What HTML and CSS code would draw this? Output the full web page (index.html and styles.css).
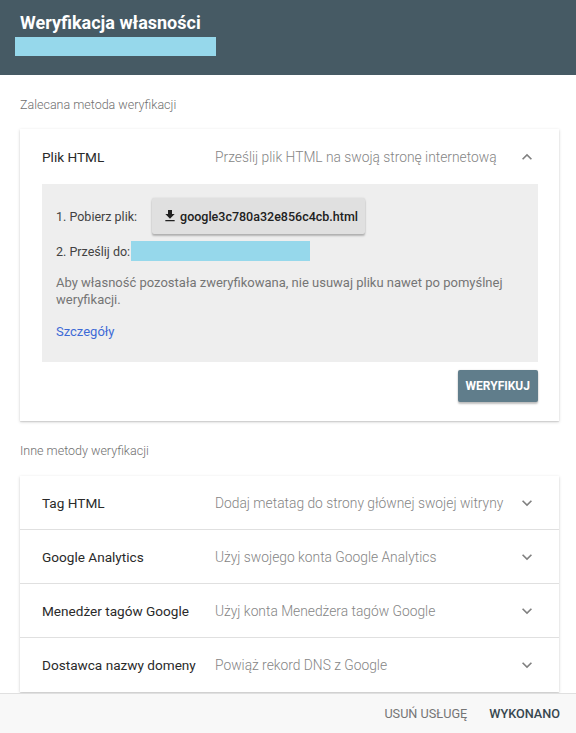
FILE: index.html
```html
<!DOCTYPE html>
<html lang="pl">
<head>
<meta charset="utf-8">
<title>Weryfikacja własności</title>
<link rel="stylesheet" href="styles.css">
</head>
<body>
<header class="top">
  <h1 class="top-title">Weryfikacja własności</h1>
  <div class="redact redact-head"></div>
</header>

<main class="content">
  <div class="section-label section-first">Zalecana metoda weryfikacji</div>

  <section class="card card-main">
    <div class="row row-open">
      <div class="row-title">Plik HTML</div>
      <div class="row-desc">Prześlij plik HTML na swoją stronę internetową</div>
      <svg class="chev" viewBox="0 0 24 24"><path d="M12 8l-6 6 1.41 1.41L12 10.83l4.59 4.58L18 14z"/></svg>
    </div>
    <div class="panel">
      <div class="step">
        <span class="step-label">1. Pobierz plik:</span>
        <button class="file-btn">
          <svg class="dl" viewBox="0 0 24 24"><path d="M19 9h-4V3H9v6H5l7 7 7-7zM5 18v2h14v-2H5z"/></svg>
          <span>google3c780a32e856c4cb.html</span>
        </button>
      </div>
      <div class="step step-two">
        <span class="step-label">2. Prześlij do:</span>
        <span class="redact redact-url"></span>
      </div>
      <p class="note">Aby własność pozostała zweryfikowana, nie usuwaj pliku nawet po pomyślnej weryfikacji.</p>
      <a class="link" href="#">Szczegóły</a>
    </div>
    <div class="actions">
      <button class="verify-btn">WERYFIKUJ</button>
    </div>
  </section>

  <div class="section-label section-second">Inne metody weryfikacji</div>

  <section class="card card-list">
    <div class="row">
      <div class="row-title">Tag HTML</div>
      <div class="row-desc">Dodaj metatag do strony głównej swojej witryny</div>
      <svg class="chev" viewBox="0 0 24 24"><path d="M16.59 8.59L12 13.17 7.41 8.59 6 10l6 6 6-6z"/></svg>
    </div>
    <div class="row">
      <div class="row-title">Google Analytics</div>
      <div class="row-desc">Użyj swojego konta Google Analytics</div>
      <svg class="chev" viewBox="0 0 24 24"><path d="M16.59 8.59L12 13.17 7.41 8.59 6 10l6 6 6-6z"/></svg>
    </div>
    <div class="row">
      <div class="row-title">Menedżer tagów Google</div>
      <div class="row-desc">Użyj konta Menedżera tagów Google</div>
      <svg class="chev" viewBox="0 0 24 24"><path d="M16.59 8.59L12 13.17 7.41 8.59 6 10l6 6 6-6z"/></svg>
    </div>
    <div class="row">
      <div class="row-title">Dostawca nazwy domeny</div>
      <div class="row-desc">Powiąż rekord DNS z Google</div>
      <svg class="chev" viewBox="0 0 24 24"><path d="M16.59 8.59L12 13.17 7.41 8.59 6 10l6 6 6-6z"/></svg>
    </div>
  </section>
</main>

<footer class="footer">
  <button class="foot-btn foot-remove">USUŃ USŁUGĘ</button>
  <button class="foot-btn foot-done">WYKONANO</button>
</footer>
</body>
</html>
```

FILE: styles.css
```css
* { box-sizing: border-box; }
html, body { margin: 0; padding: 0; }
body {
  font-family: Roboto, "Liberation Sans", Arial, sans-serif;
  background: #fff;
  color: #212121;
  height: 733px;
  overflow: hidden;
}
button { font-family: inherit; border: none; cursor: pointer; }

.top {
  height: 75px;
  background: #465a64;
  padding: 12px 20px 0 20px;
}
.top-title {
  margin: 0;
  font-size: 18px;
  line-height: 22px;
  font-weight: 700;
  color: #fff;
}
.redact { display: inline-block; background: #96d8eb; }
.redact-head {
  display: block;
  width: 201px;
  height: 19px;
  margin: 3px 0 0 -5px;
}

.content { padding: 0 17px 0 20px; }

.section-label {
  font-size: 12.5px;
  line-height: 16px;
  font-weight: 300;
  color: #6f6f6f;
}
.section-first { padding-top: 22px; margin-bottom: 16px; }
.section-second { margin-top: 22px; margin-bottom: 17px; }

.card {
  background: #fff;
  box-shadow: 0 1px 3px rgba(0,0,0,0.18), 0 1px 1px rgba(0,0,0,0.08);
}
.card-main { padding-bottom: 19px; }

.row {
  display: flex;
  align-items: center;
  height: 54px;
  padding: 0 22px;
  font-size: 13.6px;
  border-bottom: 1px solid #e0e0e0;
}
.row:last-child { border-bottom: none; }
.row-open { height: 55px; border-bottom: none; }
.row-title { width: 173px; flex: none; color: #2a2a2a; }
.row-desc { flex: 1; color: #858585; font-weight: 300; font-size: 13.8px; }
.chev { width: 20px; height: 20px; fill: #808080; flex: none; }

.panel {
  margin: 0 21px 0 22px;
  background: #eeeeee;
  padding: 14px 14px 22px 14px;
  font-size: 13px;
  color: #616161;
}
.step { display: flex; align-items: center; }
.step-label { color: #424242; font-size: 12.5px; }
.file-btn {
  display: inline-flex;
  align-items: center;
  gap: 2px;
  height: 36px;
  margin-left: 15px;
  padding: 0 7px 0 10px;
  background: #e0e0e0;
  border-radius: 2px;
  box-shadow: 0 2px 2px rgba(0,0,0,0.24), 0 0 2px rgba(0,0,0,0.12);
  font-size: 12.5px;
  font-weight: 500;
  color: #212121;
}
.dl { width: 16px; height: 16px; fill: #212121; }
.step-two { margin-top: 7px; height: 20px; }
.redact-url { width: 179px; height: 20px; margin-left: 1px; }
.note {
  margin: 13px 0 0 0;
  line-height: 17px;
  color: #757575;
}
.link {
  display: block;
  margin-top: 15px;
  line-height: 17px;
  color: #3d6ad6;
  text-decoration: none;
}

.actions {
  display: flex;
  justify-content: flex-end;
  padding: 8px 21px 0 0;
}
.verify-btn {
  height: 32px;
  padding: 0 8px;
  background: #607d8b;
  color: #fff;
  font-size: 12px;
  font-weight: 700;
  border-radius: 2px;
  box-shadow: 0 2px 2px rgba(0,0,0,0.24), 0 0 2px rgba(0,0,0,0.12);
}

.footer {
  position: fixed;
  left: 0;
  right: 0;
  bottom: 0;
  height: 40px;
  background: #f8f8f8;
  border-top: 1px solid #e0e0e0;
  display: flex;
  justify-content: flex-end;
  align-items: center;
  gap: 22px;
  padding-right: 16px;
}
.foot-btn {
  background: transparent;
  padding: 0;
  font-size: 12.7px;
  font-weight: 500;
}
.foot-remove { color: #757575; font-weight: 400; }
.foot-done { color: #37474f; }
```
